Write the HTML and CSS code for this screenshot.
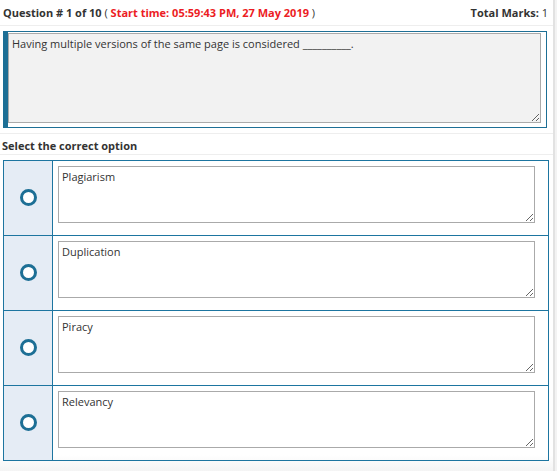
FILE: index.html
```html
<!DOCTYPE html>
<html lang="en">

<head>
    <meta charset="UTF-8">
    <meta name="viewport" content="width=device-width, initial-scale=1.0">
    <title>Quiz</title>
    <link rel="stylesheet" href="styles.css">
</head>

<body>

    <div class="page">
        <div class="quiz-header">
            <div class="q-title">
                <b>Question # 1 of 10</b> ( <span class="start-time">Start time: 05:59:43 PM, 27 May 2019</span> )
            </div>
            <div class="q-marks"><b>Total Marks:</b> 1</div>
        </div>

        <div class="question-box">
            <textarea class="question-text" readonly>Having multiple versions of the same page is considered __________.</textarea>
        </div>

        <div class="select-label">Select the correct option</div>

        <div class="options">
            <div class="option">
                <div class="radio-cell"><span class="radio"></span></div>
                <div class="answer-cell"><textarea readonly>Plagiarism</textarea></div>
            </div>
            <div class="option">
                <div class="radio-cell"><span class="radio"></span></div>
                <div class="answer-cell"><textarea readonly>Duplication</textarea></div>
            </div>
            <div class="option">
                <div class="radio-cell"><span class="radio"></span></div>
                <div class="answer-cell"><textarea readonly>Piracy</textarea></div>
            </div>
            <div class="option">
                <div class="radio-cell"><span class="radio"></span></div>
                <div class="answer-cell"><textarea readonly>Relevancy</textarea></div>
            </div>
        </div>
    </div>

</body>

</html>
```

FILE: styles.css
```css
body {
    font-family: "Open Sans", Arial, sans-serif;
    margin: 0;
    padding: 0;
    background: #f3f3f3;
    color: #333;
    font-size: 11px;
}

.page {
    width: 555px;
    box-sizing: border-box;
    border-right: 2px solid #e2e2e2;
    background: linear-gradient(#ffffff 455px, #f4f4f4 471px);
    padding: 0 0 12px 3px;
}

/* Header */
.quiz-header {
    display: flex;
    justify-content: space-between;
    height: 25px;
    line-height: 26px;
    border-bottom: 1px solid #eee;
    margin-left: -3px;
    padding-left: 3px;
    padding-right: 5px;
}

.start-time {
    color: #ec1c24;
    font-weight: bold;
}

/* Question */
.question-box {
    margin-top: 5px;
    width: 544px;
    height: 97px;
    box-sizing: border-box;
    border: 1px solid #1d6f95;
    border-left: 5px solid #1d6f95;
    padding: 1px 5px 4px 0;
    background: #fff;
}

.question-text {
    display: block;
    width: 100%;
    height: 100%;
    box-sizing: border-box;
    background: #f2f2f2;
    border: 1px solid #aaa;
    font-family: inherit;
    font-size: 11px;
    color: #333;
    padding: 2px 3px;
    resize: vertical;
    margin: 0;
}

.select-label {
    margin-top: 5px;
    margin-left: -3px;
    padding-left: 2px;
    border-top: 1px solid #eee;
    border-bottom: 1px solid #eee;
    height: 20px;
    line-height: 24px;
    font-weight: bold;
}

/* Options */
.options {
    margin-top: 5px;
    width: 546px;
    box-sizing: border-box;
    border: 1px solid #1d75a0;
}

.option {
    display: grid;
    grid-template-columns: 49px 1fr;
    height: 74px;
    border-top: 1px solid #1d75a0;
}

.option:first-child {
    border-top: none;
}

.radio-cell {
    background: #e5ecf5;
    border-right: 1px solid #1d75a0;
    display: flex;
    align-items: center;
    justify-content: center;
}

.radio {
    display: block;
    width: 11px;
    height: 11px;
    border: 3px solid #1d6f95;
    border-radius: 50%;
    background: #fff;
    margin-top: -2px;
}

.answer-cell {
    padding: 5px 13px 0 5px;
}

.answer-cell textarea {
    display: block;
    width: 100%;
    height: 57px;
    box-sizing: border-box;
    border: 1px solid #aaa;
    font-family: inherit;
    font-size: 11px;
    color: #333;
    padding: 2px 3px;
    margin: 0;
    resize: vertical;
}
```
